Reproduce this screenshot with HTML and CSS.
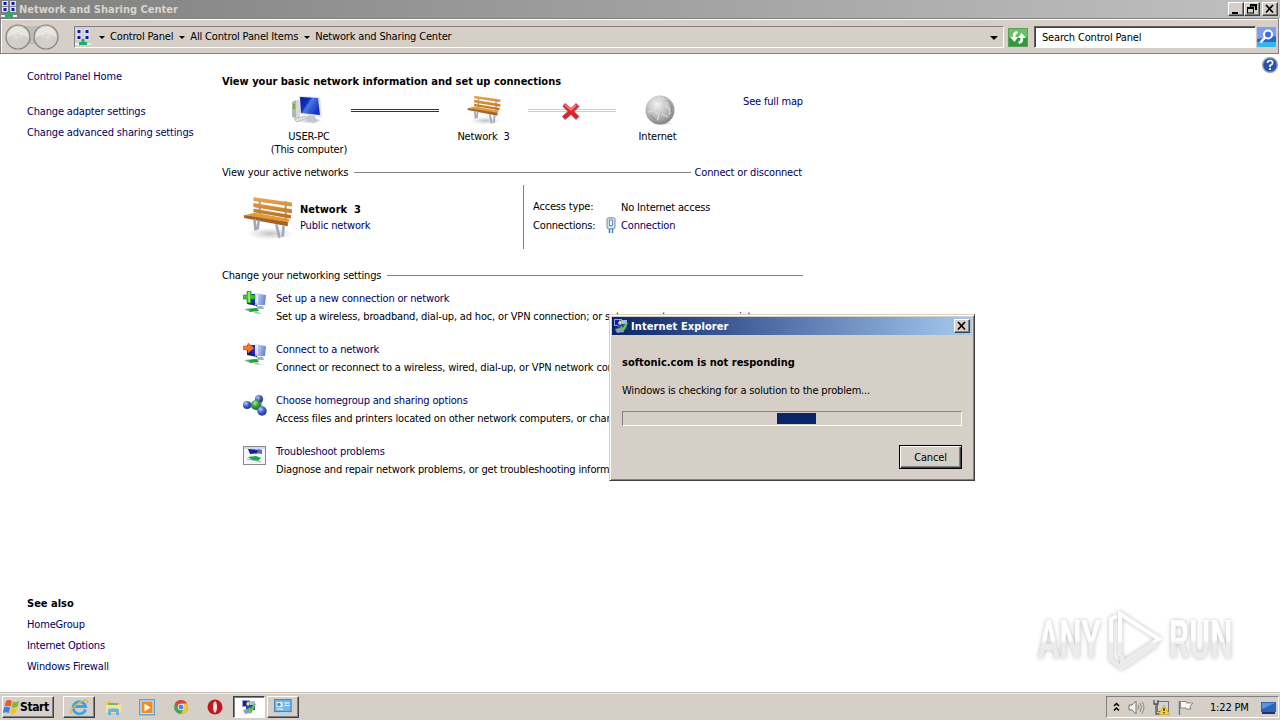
FILE: index.html
```html
<!DOCTYPE html>
<html lang="en">
<head>
  <meta charset="UTF-8" />
  <meta name="viewport" content="width=device-width, initial-scale=1.0"/>
  <title>Network and Sharing Center</title>
  <link rel="stylesheet" href="styles.css">
</head>
<body>
  <!-- Shared icons -->
  <svg class="defs" width="0" height="0">
    <defs>
      <linearGradient id="screen" x1="0" y1="0" x2="1" y2="0.6">
        <stop offset="0" stop-color="#0818a0"/><stop offset="0.4" stop-color="#1230b8"/><stop offset="0.5" stop-color="#4a78e8"/><stop offset="1" stop-color="#1030c0"/>
      </linearGradient>
      <linearGradient id="pale" x1="0" y1="0" x2="1" y2="0.3">
        <stop offset="0" stop-color="#e4ecfc"/><stop offset="1" stop-color="#6c84dc"/>
      </linearGradient>
      <linearGradient id="wood" x1="0" y1="0" x2="0" y2="1">
        <stop offset="0" stop-color="#eda850"/><stop offset="1" stop-color="#b56c1c"/>
      </linearGradient>
      <radialGradient id="globe" cx="0.4" cy="0.3" r="0.7">
        <stop offset="0" stop-color="#f4f4f4"/><stop offset="0.6" stop-color="#b8b8b8"/><stop offset="1" stop-color="#858585"/>
      </radialGradient>
      <radialGradient id="ball" cx="0.35" cy="0.3" r="0.7">
        <stop offset="0" stop-color="#b8ccf8"/><stop offset="0.5" stop-color="#4868c8"/><stop offset="1" stop-color="#1c3490"/>
      </radialGradient>
      <radialGradient id="greenball" cx="0.4" cy="0.3" r="0.7">
        <stop offset="0" stop-color="#b4e8a8"/><stop offset="0.5" stop-color="#38a038"/><stop offset="1" stop-color="#187020"/>
      </radialGradient>
      <radialGradient id="shadow">
        <stop offset="0" stop-color="#999" stop-opacity="0.6"/><stop offset="1" stop-color="#bbb" stop-opacity="0"/>
      </radialGradient>
      <linearGradient id="wm" gradientUnits="userSpaceOnUse" x1="0" y1="0" x2="0" y2="64">
        <stop offset="0.5" stop-color="#fff"/><stop offset="0.56" stop-color="#ececec"/>
      </linearGradient>
      <symbol id="bench" viewBox="0 0 48 42">
        <ellipse cx="26" cy="36" rx="23" ry="6" fill="url(#shadow)"/>
        <path d="M16 2v19M41 5v21" stroke="#9a9ca8" stroke-width="2"/>
        <path d="M10 1l37 5v4L10 4.500zM10 6.500l37 6v4L10 10.500zM10 12l36 6v3.500L10 15.500z" fill="url(#wood)"/>
        <path d="M2 18l9-2 34 6-2 4z" fill="#e39a3e"/>
        <path d="M1 18l42 7v4L1 21z" fill="#a5641d"/>
        <path d="M11 22l1 11M15 23l-1 9M32 27l3 13M39 28l-1 11" stroke="#a3a7ba" stroke-width="2.500" fill="none"/>
      </symbol>
      <symbol id="tree" viewBox="0 0 16 16">
        <path d="M1 0h6v5H1zM9 0h6v5H9zM1 6h6v5H1zM9 6h6v5H9z" fill="#d8e4f8"/>
        <path d="M2.500 1h3v3h-3zM10.500 1h3v3h-3zM2.500 7h3v3h-3zM10.500 7h3v3h-3z" fill="#1414a8"/>
        <path d="M0 14h16v2H0z" fill="#e8f0f8"/>
        <path d="M6.500 10h3v3h2.500v3H4v-3h2.500z" fill="#22b060"/>
      </symbol>
      <symbol id="pcs" viewBox="0 0 24 24">
        <path d="M4 3l10 0 0 12-10-2z" fill="#10188c"/>
        <path d="M12 2l11 2-1 10-10 0z" fill="url(#pale)"/>
        <path d="M8 3l6 0 0 10-5-1z" fill="#1a2cb8"/>
        <path d="M12 2.500l3 .5v10l-3-.5z" fill="#dce6fa"/>
        <path d="M13 15l7 0 1 3-6 0z" fill="#a8b0bc"/>
        <path d="M2 18l12-1 2 3-9 1z" fill="#16a83c"/>
        <path d="M1 18l7 1-4 1zM13 20l6 3-8-1z" fill="#aabcb0"/>
      </symbol>
      <symbol id="report" viewBox="0 0 16 16">
        <path d="M1 1h8v7H1z" fill="#8ca4e0"/>
        <path d="M2 2h6v5H2z" fill="#1420a0"/>
        <path d="M5 5h9v6H5z" fill="#2848c4"/>
        <path d="M9 2h5v4H9z" fill="#a8c0e8"/>
        <path d="M5 5l2-3 2 3-2 2z" fill="#f0e040"/>
        <path d="M2 11l5-1 3 4-6 1z" fill="#8ca0b4"/>
        <path d="M7 10l3 5 5-10-2-1-3 6-1-2z" fill="#66c83c"/>
      </symbol>
    </defs>
  </svg>

  <div class="titlebar">
    <svg class="ico16"><use href="#tree"/></svg>
    <span class="title-text">Network and Sharing Center</span>
    <div class="win-buttons">
      <button class="win-btn"><svg width="14" height="12"><path d="M3 9h6v2H3z"/></svg></button>
      <button class="win-btn"><svg width="14" height="12"><path d="M5 1h7v6h-2V3.500H6V4H5zM2 4h7v6.500H2zM3 6v3.500h5V6z" fill-rule="evenodd"/></svg></button>
      <button class="win-btn close"><svg width="14" height="12"><path d="M3 2l7 7.500M10 2L3 9.500" stroke="#000" stroke-width="1.700"/></svg></button>
    </div>
  </div>

  <div class="toolbar">
    <svg class="nav-arrows" width="56" height="28" viewBox="0 0 56 28">
      <rect x="12" y="3" width="32" height="18" fill="#c0bdb8"/>
      <g fill="#d2cec8" stroke="#858380" stroke-width="1.200">
        <circle cx="15" cy="14" r="12"/><circle cx="43" cy="14" r="12"/>
      </g>
      <path d="M4.500 14a10.500 10.500 0 0 1 21 0q-10-4-21 0zM32.500 14a10.500 10.500 0 0 1 21 0q-10-4-21 0z" fill="#e9e6e2"/>
      <path d="M20 14h-9M15 10l-4 4 4 4M38 14h9M43 10l4 4-4 4" fill="none" stroke="#dedad5" stroke-width="2"/>
    </svg>
    <div class="address">
      <svg class="ico16"><use href="#tree"/></svg>
      <i class="arrow"></i><span>Control Panel</span>
      <i class="arrow"></i><span>All Control Panel Items</span>
      <i class="arrow"></i><span>Network and Sharing Center</span>
      <i class="arrow big"></i>
    </div>
    <svg class="refresh" width="20" height="19" viewBox="0 0 20 19">
      <rect x=".5" y=".5" width="19" height="18" fill="#2f9a38" stroke="#5c9c5c"/>
      <rect x="1" y="1" width="18" height="8" fill="#6cc068"/>
      <path d="M9 3Q4 4 5 9H2l4.500 5L10 9H7.500Q7 6 10 5zM11 16q5-1 4-6h3l-4.500-5L10 10h2.500q.500 3-2.500 4z" fill="#fff"/>
    </svg>
    <div class="search">Search Control Panel</div>
    <svg class="search-btn" width="19" height="20" viewBox="0 0 19 20">
      <rect width="19" height="20" fill="#2e62d4"/>
      <path d="M0 0h19v9L0 12z" fill="#7d9eea"/>
      <path d="M0 15h19v5H0z" fill="#35b5e8"/>
      <circle cx="11" cy="7.500" r="4" fill="#3c6cdc" stroke="#fff" stroke-width="2"/>
      <path d="M8 10.500l-4.500 5" stroke="#fff" stroke-width="2.500"/>
    </svg>
  </div>

  <div class="content">
    <nav class="sidebar">
      <a class="home">Control Panel Home</a>
      <a>Change adapter settings</a>
      <a>Change advanced sharing settings</a>
      <div class="see-also">
        <b>See also</b>
        <a>HomeGroup</a>
        <a>Internet Options</a>
        <a>Windows Firewall</a>
      </div>
    </nav>

    <main>
      <h1>View your basic network information and set up connections</h1>
      <div class="map">
        <div class="node pc">
          <svg width="34" height="30" viewBox="0 0 34 30">
            <ellipse cx="20" cy="26" rx="13" ry="3" fill="url(#shadow)"/>
            <path d="M2 7l8-3v17l-2 3-6-2z" fill="#d6d8d8"/><path d="M2 7l4-2v18l-4-1z" fill="#b2b6b2"/><path d="M4 9v5" stroke="#7fae2c" stroke-width="2"/>
            <path d="M9 1l21 1 2 20-22-3z" fill="#dfe3ec"/>
            <path d="M10 2l18 1 2 17-19-2z" fill="url(#screen)"/>
            <path d="M18 20l7 1 1 3 4 1-6 3-8-2z" fill="#c2c6ce"/>
            <path d="M4 24l11-3 3 2-11 4z" fill="#e0e0e4" stroke="#a8a8ac" stroke-width=".7"/>
          </svg>
          <span>USER-PC</span><span>(This computer)</span>
        </div>
        <div class="link on"></div>
        <div class="node">
          <svg width="34" height="30"><use href="#bench"/></svg>
          <span class="pre">Network  3</span>
        </div>
        <div class="link off">
          <svg width="18" height="18" viewBox="0 0 18 18">
            <path d="M3 1.500l6 5 5-5 3 3-5 5 5 5-3 3-5-5-6 5-2.500-3 5.500-5-5-5z" fill="#e02028" stroke="#c05058"/>
            <path d="M3 3l6 5 5-5" fill="none" stroke="#f08888" stroke-width="1.500"/>
          </svg>
        </div>
        <div class="node net">
          <svg width="34" height="31" viewBox="0 0 34 31">
            <ellipse cx="19" cy="28" rx="12" ry="3" fill="url(#shadow)"/>
            <circle cx="17" cy="15" r="14.500" fill="url(#globe)"/>
            <path d="M10 3l4 2 2 3M16 1l1 3 4-1M25 6l-2 5 4 4-1 5M5 17l6-1 5 4-2 6M19 19l6 3" fill="none" stroke="#dcdcdc" stroke-width="1.200"/>
            <path d="M24 5l5 6-1 6M7 20l8 7" fill="none" stroke="#8a8a8a"/>
          </svg>
          <span>Internet</span>
        </div>
        <a class="full-map">See full map</a>
      </div>

      <div class="section">
        <span>View your active networks</span><i></i><a>Connect or disconnect</a>
      </div>
      <div class="active">
        <svg class="bench" width="50" height="44"><use href="#bench"/></svg>
        <div class="net-name">
          <b class="pre">Network  3</b>
          <a>Public network</a>
        </div>
        <div class="net-info">
          <span class="label">Access type:</span><span></span><span class="val">No Internet access</span>
          <span>Connections:</span>
          <svg width="10" height="17" viewBox="0 0 10 17">
            <rect x="1" y=".8" width="8" height="11" rx="1.500" fill="#cfe0f0" stroke="#6f8fac"/>
            <rect x="3.500" y="3" width="3" height="5.500" fill="#f4f8fc" stroke="#5878a0" stroke-width=".8"/>
            <path d="M3.500 12v4M6.500 12v4" stroke="#3a80a8" stroke-width="1.500"/>
          </svg>
          <a>Connection</a>
        </div>
      </div>

      <div class="section">
        <span>Change your networking settings</span><i></i>
      </div>
      <ul class="tasks">
        <li>
          <svg width="24" height="24" viewBox="0 0 24 24"><use href="#pcs"/><path d="M4 0h4v4h4v4H8v4H4V8H0V4h4z" fill="#44c030" stroke="#2a9020" stroke-width=".7"/><path d="M5 1h2v10H5z" fill="#8ce468"/></svg>
          <div><a>Set up a new connection or network</a><p>Set up a wireless, broadband, dial-up, ad hoc, or VPN connection; or set up a router or access point.</p></div>
        </li>
        <li>
          <svg width="24" height="24" viewBox="0 0 24 24"><use href="#pcs"/><path d="M0 4h5V1l6 5-6 5V8H0z" fill="#f07828" stroke="#d86018" stroke-width=".6"/></svg>
          <div><a>Connect to a network</a><p>Connect or reconnect to a wireless, wired, dial-up, or VPN network connection.</p></div>
        </li>
        <li>
          <svg width="24" height="24" viewBox="0 0 24 24">
            <path d="M4 12l14-6 1 13z" fill="none" stroke="#a8b4c4" stroke-width="2"/>
            <circle cx="16" cy="6" r="4" fill="url(#ball)"/><circle cx="4" cy="12" r="4" fill="url(#ball)"/>
            <circle cx="13" cy="12" r="5" fill="url(#greenball)"/><circle cx="19" cy="18" r="4.700" fill="url(#ball)"/>
          </svg>
          <div><a>Choose homegroup and sharing options</a><p>Access files and printers located on other network computers, or change sharing settings.</p></div>
        </li>
        <li>
          <svg width="24" height="24" viewBox="0 0 24 24">
            <rect x=".5" y="2.500" width="22" height="18" fill="#f4f6f8" stroke="#858b92"/>
            <path d="M1 3h21v2H1z" fill="#d4d8e8"/>
            <path d="M5 5l14 1v3L7 10z" fill="#1422a0"/><path d="M15 5l4 1v4l-5-1z" fill="#5070d0"/>
            <path d="M5 13l8-1 5 2-3 3-6-1z" fill="#1ca84c"/><path d="M4 15l14 3" stroke="#a0b8a8"/>
          </svg>
          <div><a>Troubleshoot problems</a><p>Diagnose and repair network problems, or get troubleshooting information.</p></div>
        </li>
      </ul>
    </main>

    <svg class="help" width="16" height="16" viewBox="0 0 16 16">
      <circle cx="8" cy="8" r="7.300" fill="#2b50a8" stroke="#8b9cbc" stroke-width="1.400"/>
      <path d="M5.500 6q0-2.500 2.600-2.500T10.600 6q0 1.300-2.500 2.500V10M8 11v2" fill="none" stroke="#fff" stroke-width="1.700"/>
    </svg>
  </div>

  <div class="taskbar">
    <button class="start">
      <svg width="17" height="16" viewBox="0 0 17 16">
        <path d="M3 2q3-2 6 0L7.500 7.500q-3-1.500-6 0z" fill="#e85a28"/><path d="M10 2.500q3 1.500 6-.5l-1.500 5.500q-3 2-6 .5z" fill="#7ab83c"/>
        <path d="M1.200 8.500q3-1.500 6 0L5.700 14q-3-1.500-6 0z" fill="#3c84d8"/><path d="M8.200 9q3 1.500 6-.5L12.700 14q-3 2-6 .5z" fill="#f8c030"/>
      </svg>
      Start
    </button>
    <div class="task raised">
      <svg width="18" height="18" viewBox="0 0 18 18">
        <path d="M15.500 11.500A6.300 6 0 1 1 15.600 8.500H5" fill="none" stroke="#3ca4e4" stroke-width="2.800"/>
        <path d="M1 16Q-1 12 8 5.500 15 1 17 2.500q1 1 0 3" fill="none" stroke="#e8b838" stroke-width="1.500"/>
      </svg>
    </div>
    <div class="task">
      <svg width="17" height="17" viewBox="0 0 17 17">
        <path d="M1 3l5-1 1 2h8v11H1z" fill="#e8c860"/><path d="M3 4h10v3H3z" fill="#70b868"/><path d="M1 6h15v8H1z" fill="#f8e498"/>
        <path d="M3 16v-5q0-1.500 2-1.500h7q2 0 2 1.500v5h-3v-3H6v3z" fill="#68b4e0"/>
      </svg>
    </div>
    <div class="task">
      <svg width="16" height="17" viewBox="0 0 16 17">
        <rect x=".7" y=".7" width="14.600" height="15" fill="#d8ecfc" stroke="#58a4dc" stroke-width="1.400"/>
        <rect x="2.500" y="2.500" width="11" height="11.500" fill="#f08c1c"/><path d="M5.500 4.500l6 4-6 4z" fill="#fff"/>
      </svg>
    </div>
    <div class="task">
      <svg width="14" height="14" viewBox="0 0 14 14">
        <circle cx="7" cy="7" r="7" fill="#40a850"/><path d="M1 3.500A7 7 0 0 1 13 3.500L7 7z" fill="#dc4438"/><path d="M1 3.500L7 7 4 10.500z" fill="#dc4438"/>
        <path d="M13 3.500A7 7 0 0 1 7 14l3-6-3-4.500z" fill="#f4c434"/><circle cx="7" cy="7" r="3.300" fill="#fff"/><circle cx="7" cy="7" r="2.500" fill="#4888e8"/>
      </svg>
    </div>
    <div class="task">
      <svg width="16" height="16" viewBox="0 0 16 16"><circle cx="8" cy="8" r="7.500" fill="#c01820"/><ellipse cx="8" cy="8" rx="2" ry="5.800" fill="#f4e4e0"/></svg>
    </div>
    <div class="task pressed"><svg class="ico16"><use href="#report"/></svg></div>
    <div class="task raised">
      <svg width="18" height="16" viewBox="0 0 18 16">
        <rect x=".6" y=".6" width="16.500" height="12" fill="#78b8e4" stroke="#3c80b0"/>
        <rect x="2.500" y="3" width="6" height="5" fill="#e8f4fc"/><path d="M10.500 4h5M10.500 6.500h5M3 10h6" stroke="#fff"/>
        <circle cx="5" cy="5.500" r="1.800" fill="#4890c8"/><path d="M6 13h6v3H6z" fill="#b0d4ec"/>
      </svg>
    </div>

    <div class="tray">
      <svg width="7" height="10" viewBox="0 0 7 10"><path d="M1 4l2.500-2.500L6 4M1 8.500L3.500 6 6 8.500" fill="none" stroke="#000" stroke-width="1.500"/></svg>
      <svg width="17" height="15" viewBox="0 0 17 15"><path d="M1 5h3l4-4v13l-4-4H1z" fill="#f0f0ee" stroke="#777"/><path d="M10 5q1.500 2.500 0 5M12 3q3 4.500 0 9M14 1.500q4 6 0 12" fill="none" stroke="#888"/></svg>
      <svg width="17" height="16" viewBox="0 0 17 16"><rect x="4.500" y="2.500" width="11" height="10" fill="#d0d4d8" stroke="#707478"/><path d="M1 1v4h4V1M3 5v10h4" fill="none" stroke="#555" stroke-width="1.300"/><path d="M11 6l5.500 9.500h-11z" fill="#f8d428" stroke="#b89810" stroke-width=".6"/><path d="M11 9v3M11 13v1.300" stroke="#222" stroke-width="1.300"/></svg>
      <svg width="16" height="15" viewBox="0 0 16 15"><path d="M1.500 1v14" stroke="#777" stroke-width="1.500"/><path d="M2.500 1.500h6v1.500h6.500l-3 3 1 3H8V8H2.500z" fill="#f8f8f8" stroke="#888"/></svg>
      <span class="clock">1:22 PM</span>
      <svg width="15" height="13" viewBox="0 0 15 13"><path d="M0 1h15v10H0z" fill="#2c62b8"/><path d="M1 2h13L1 8z" fill="#5c94dc"/><path d="M1 11h13v2H1z" fill="#16346c"/></svg>
    </div>
  </div>

  <!-- Error dialog -->
  <div class="dialog">
    <div class="dialog-title">
      <svg class="ico16"><use href="#report"/></svg>
      <span>Internet Explorer</span>
      <button class="win-btn"><svg width="14" height="12"><path d="M3 2l7 7.500M10 2L3 9.500" stroke="#000" stroke-width="1.700"/></svg></button>
    </div>
    <div class="dialog-body">
      <b>softonic.com is not responding</b>
      <p>Windows is checking for a solution to the problem...</p>
      <div class="progress"><div></div></div>
      <button class="cancel">Cancel</button>
    </div>
  </div>

  <div class="watermark">
    <span>ANY</span>
    <svg width="60" height="64" viewBox="0 0 60 64">
      <g fill="none" stroke="url(#wm)" stroke-width="4">
        <path d="M15 48V6l39 25-37 24v-8"/><path d="M12 8l-6 3v41l11 8 35-24"/>
      </g>
    </svg>
    <span>RUN</span>
  </div>
</body>
</html>
```
FILE: styles.css
```css
* {
  box-sizing: border-box;
}

body {
  margin: 0;
  width: 1280px;
  height: 720px;
  overflow: hidden;
  display: flex;
  flex-direction: column;
  position: relative;
  background: #fff;
  color: #000;
  font: 11px/13px Tahoma, "DejaVu Sans Condensed", "DejaVu Sans", sans-serif;
  font-stretch: condensed;
  letter-spacing: -0.17px;
  white-space: nowrap;
}

svg {
  display: block;
  flex: none;
}

.defs {
  position: absolute;
}

button {
  font: inherit;
  letter-spacing: inherit;
  padding: 0;
  color: #000;
}

a {
  color: #00005f;
}

b, h1 {
  letter-spacing: 0;
}

p, h1, ul {
  margin: 0;
  padding: 0;
}

.pre {
  white-space: pre;
}

.ico16 {
  width: 16px;
  height: 16px;
}

/* Title bar */
.titlebar {
  height: 18px;
  flex: none;
  display: flex;
  align-items: center;
  padding: 0 2px 0 1px;
  background: linear-gradient(to right, #808080, #c0c0c0);
}

.title-text {
  margin-left: 2px;
  color: #d8d4cc;
  font-weight: bold;
  letter-spacing: 0;
}

.win-buttons {
  display: flex;
  margin-left: auto;
}

.win-btn {
  width: 16px;
  height: 14px;
  background: #d5cfc7;
  border: 1px solid;
  border-color: #fff #404040 #404040 #fff;
  box-shadow: inset -1px -1px #808080;
}

.win-btn.close {
  margin-left: 2px;
}

/* Toolbar */
.toolbar {
  height: 36px;
  flex: none;
  display: flex;
  align-items: center;
  margin-right: 1px;
  padding: 2px 2px 0;
  background: #d5cfc7;
  border: 1px solid #808080;
  box-shadow: inset 1px 1px #fff;
}

.nav-arrows {
  margin-right: 14px;
}

.address {
  width: 930px;
  height: 22px;
  display: flex;
  align-items: center;
  margin-left: 1px;
  padding-bottom: 1px;
  border: 1px solid;
  border-color: #808080 #fff #fff #808080;
}

.arrow {
  border: 3px solid transparent;
  border-top-color: #000;
  border-bottom: 0;
  margin: 1px 5px 0 6px;
}

.address .ico16 {
  margin-right: 2px;
}

.arrow.big {
  border-width: 4px 4px 0;
  margin: 2px 5px 0 auto;
}

.refresh {
  margin: 0 5px 0 4px;
}

.search {
  width: 222px;
  height: 22px;
  margin-left: 1px;
  padding: 4px 7px 0;
  background: #fff;
  border: 1px solid;
  border-color: #606060 #fff #fff #606060;
  box-shadow: inset 1px 1px #404040;
}

.search-btn {
  margin-left: 1px;
}

/* Content */
.content {
  flex: 1;
  display: flex;
  position: relative;
}

.sidebar {
  width: 222px;
  padding: 16px 0 19px 27px;
  display: flex;
  flex-direction: column;
  gap: 8px;
}

.home {
  margin-bottom: 14px;
}

.see-also {
  margin-top: auto;
  display: flex;
  flex-direction: column;
  gap: 8px;
}

main {
  width: 581px;
  padding-top: 21px;
}

h1 {
  font-size: 11px;
  line-height: 13px;
}

.map {
  display: flex;
  height: 78px;
  padding-top: 7px;
}

.node {
  width: 89px;
  display: flex;
  flex-direction: column;
  align-items: center;
}

.node svg {
  margin-bottom: 5px;
}

.pc {
  width: 84px;
  margin: 0 0 0 45px;
}

.pc svg {
  margin-left: -5px;
}

.net {
  width: 83px;
}

.net svg {
  margin: 0 0 4px 4px;
}

.link {
  width: 88px;
  height: 3px;
  margin-top: 14px;
  border: 0 solid #17357a;
  border-width: 1px 0;
}

.link.off {
  border-color: #ccc;
}

.link.off svg {
  margin: -8px 0 0 34px;
  position: relative;
}

.full-map {
  margin: 0 0 0 auto;
}

.section {
  display: flex;
  align-items: center;
}

.section i {
  flex: 1;
  height: 1px;
  margin: 0 0 1px 6px;
  background: #808080;
}

.section a {
  margin: 0 1px 0 4px;
}

.active {
  display: flex;
  height: 64px;
  margin: 6px 0 20px;
}

.bench {
  margin: 11px 0 0 21px;
}

.net-name {
  width: 223px;
  margin-left: 7px;
  padding-top: 18px;
  display: flex;
  flex-direction: column;
  gap: 3px;
}

.net-info {
  flex: 1;
  display: grid;
  grid-template-columns: 73px 15px auto;
  align-content: start;
  align-items: center;
  row-gap: 3px;
  padding: 14px 0 0 9px;
  border-left: 1px solid #808080;
}

.net-info .val {
  margin-top: 2px;
}

.net-info .label {
  height: 14px;
}

.tasks {
  list-style: none;
  margin-top: 10px;
}

.tasks li {
  display: flex;
  height: 51px;
  padding-left: 21px;
}

.tasks svg {
  margin: -1px 9px 0 0;
}

.tasks p {
  margin-top: 5px;
}

.help {
  position: absolute;
  top: 3px;
  right: 2px;
}

/* Taskbar */
.taskbar {
  height: 28px;
  flex: none;
  display: flex;
  align-items: flex-start;
  padding: 3px 1px 0 2px;
  background: #d5cfc7;
  border-top: 1px solid #c8c4bc;
  box-shadow: inset 0 1px #f0ede8;
}

.start, .raised {
  background: #d5cfc7;
  border: 1px solid;
  border-color: #fff #404040 #404040 #fff;
  box-shadow: inset -1px -1px #808080;
}

.start {
  width: 52px;
  height: 22px;
  margin-right: 9px;
  display: flex;
  align-items: center;
  font-weight: bold;
  font-size: 12px;
  letter-spacing: -0.4px;
}

.task {
  width: 32px;
  height: 22px;
  margin-right: 2px;
  display: flex;
  align-items: center;
  justify-content: center;
}

.pressed {
  background: #fff;
  border: 1px solid;
  border-color: #404040 #fff #fff #404040;
  box-shadow: inset 1px 1px #808080;
}

.tray {
  height: 22px;
  width: 173px;
  margin-left: auto;
  display: flex;
  align-items: center;
  gap: 8px;
  padding-left: 6px;
  border: 1px solid;
  border-color: #808080 #fff #fff #808080;
}

.clock {
  margin: 0 4px 0 8px;
}

/* Dialog */
.dialog {
  position: absolute;
  left: 609px;
  top: 314px;
  width: 366px;
  height: 167px;
  padding: 2px;
  background: #d5cfc7;
  border: 1px solid;
  border-color: #d5cfc7 #404040 #404040 #d5cfc7;
  box-shadow: inset 1px 1px #fff, inset -1px -1px #808080;
}

.dialog-title {
  height: 18px;
  display: flex;
  align-items: center;
  padding: 0 2px 0 1px;
  color: #fff;
  font-weight: bold;
  letter-spacing: 0.1px;
  background: linear-gradient(to right, #0a246a, #a6caf0);
}

.dialog-title span {
  flex: 1;
  margin-left: 2px;
}

.dialog-body {
  display: flex;
  flex-direction: column;
  padding: 21px 10px 0;
}

.dialog-body p {
  margin: 15px 0 14px;
}

.progress {
  height: 15px;
  padding: 1px 154px;
  border: 1px solid;
  border-color: #808080 #fff #fff #808080;
}

.progress div {
  width: 39px;
  height: 11px;
  background: #0a246a;
}

.cancel {
  width: 63px;
  height: 24px;
  margin: 19px 0 0;
  align-self: flex-end;
  background: #d5cfc7;
  border: 1px solid #000;
  box-shadow: inset 1px 1px #fff, inset -1px -1px #404040, inset -2px -2px #808080;
}

/* Watermark */
.watermark {
  position: absolute;
  left: 1038px;
  top: 608px;
  height: 64px;
  display: flex;
  align-items: center;
  filter: drop-shadow(0 0 2px #bbb);
}

.watermark svg {
  margin-right: 4px;
}

.watermark span {
  width: 108px;
  margin-right: -41px;
  transform: scaleX(0.6);
  transform-origin: left;
  color: transparent;
  background: linear-gradient(#fff 50%, #ececec 56%);
  background-clip: text;
  -webkit-background-clip: text;
  font: bold 53px/54px Roboto, sans-serif;
  letter-spacing: 0;
}
```
